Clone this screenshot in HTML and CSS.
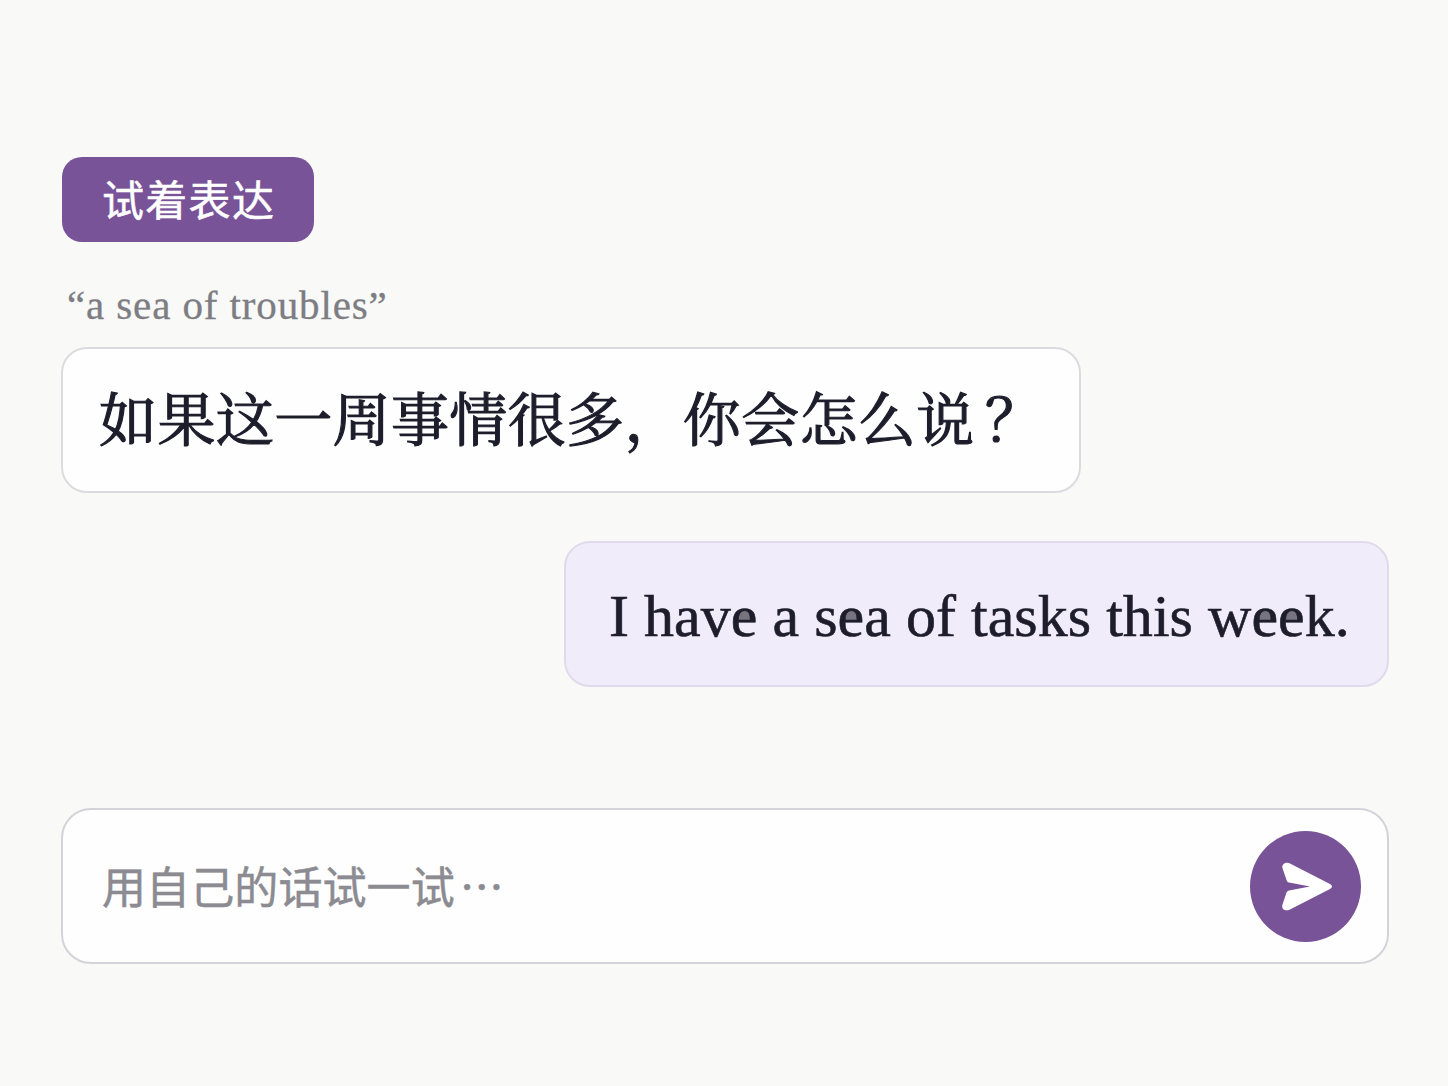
FILE: index.html
```html
<!DOCTYPE html>
<html lang="zh-CN">
<head>
<meta charset="utf-8">
<title>试着表达</title>
<link rel="stylesheet" href="styles.css">
</head>
<body>
<main class="practice">
  <div class="tag">试着表达</div>
  <p class="phrase"><span class="line">“a sea of troubles”</span></p>
  <section class="bubble prompt"><span class="line">如果这一周事情很多，你会怎么说<span class="mark">？</span></span></section>
  <section class="bubble reply"><span class="line">I hav<span class="e">e</span> a s<span class="e">e</span>a of tasks this w<span class="e">e</span><span class="e">e</span>k.</span></section>
  <form class="composer">
    <span class="placeholder">用自己的话试一试<span class="dots">…</span></span>
    <button class="send" type="button" aria-label="发送">
      <svg viewBox="0 0 111 111" width="111" height="111"><path d="M39.500 32.200 80 53Q84 55.500 80 58L39.500 78.700C35 80.500 31 78 32.500 73.500L36.500 61.500Q37.200 59.700 39 59.400L60 55.500 39 51.600Q37.300 51.300 36.700 49.500L32.600 37.500C31.200 33.500 35.300 30.300 39.500 32.200Z"/></svg>
    </button>
  </form>
</main>
</body>
</html>
```
FILE: styles.css
```css
* { box-sizing: border-box; }
body {
  margin: 0;
  background: #f9f9f7;
  color: #1d1d2c;
  font-family: "Liberation Serif", "Noto Serif CJK SC", "Noto Sans CJK SC", serif;
}
.practice {
  width: 1448px;
  height: 1086px;
  padding: 157px 59px 0 61px;
  display: flex;
  flex-direction: column;
  align-items: flex-start;
}
.line { white-space: nowrap; }
.tag {
  width: 252px;
  height: 85px;
  margin-left: 1px;
  padding-left: 40px;
  border-radius: 20px;
  background: #785398;
  color: #fff;
  font: 42px/82px "Noto Sans CJK SC", sans-serif;
  letter-spacing: 1.3px;
  -webkit-text-stroke: 0.5px currentColor;
}
.phrase {
  margin: 37px 0 0 6px;
  height: 68px;
  color: #7d7d84;
  font-size: 41px;
  line-height: 52px;
  letter-spacing: 0.88px;
  -webkit-text-stroke: 0.3px currentColor;
}
.bubble {
  height: 146px;
  border: 2px solid #dcdce0;
  border-radius: 26px;
  display: flex;
  align-items: center;
}
.prompt {
  width: 1020px;
  padding: 0 0 9px 36px;
  background: #fefefe;
  font-size: 58px;
  letter-spacing: 0.38px;
  -webkit-text-stroke: 1.2px currentColor;
}
.mark { margin-left: 10px; }
.reply {
  width: 825px;
  margin-top: 48px;
  align-self: flex-end;
  padding: 4px 0 0 43px;
  background: #f1ecfa;
  border-color: #e1daed;
  font-size: 60px;
  letter-spacing: 0.03px;
  -webkit-text-stroke: 0.6px currentColor;
}
.e {
  background: radial-gradient(ellipse 9px 11px at 50% 100%, #77747f 94%, transparent 100%) 4px 26px / 18px 11px no-repeat;
}
.composer {
  width: 1328px;
  height: 156px;
  margin: 121px 0 0;
  padding: 0 26px 0 39px;
  border: 2px solid #d3d3da;
  border-radius: 30px;
  background: #fefefe;
  display: flex;
  align-items: center;
  justify-content: space-between;
}
.placeholder {
  padding-bottom: 3px;
  color: #8b8b91;
  font: 44px/64px "Noto Sans CJK SC", sans-serif;
  letter-spacing: 0.1px;
  -webkit-text-stroke: 0.5px currentColor;
}
.dots { margin-left: 5px; }
.send {
  width: 111px;
  height: 111px;
  padding: 0;
  border: 0;
  border-radius: 50%;
  background: #785398;
}
.send svg { display: block; fill: #fff; }
```
